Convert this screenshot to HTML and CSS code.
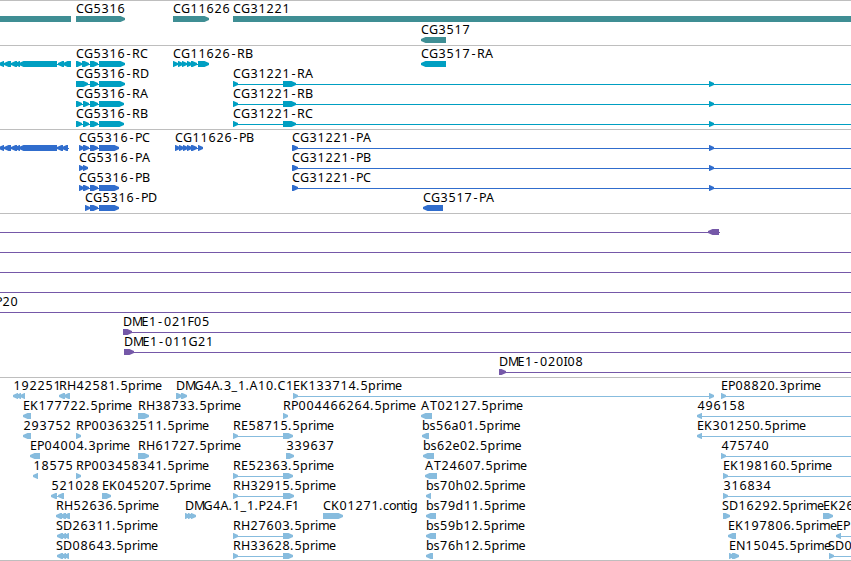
FILE: index.html
```html
<!DOCTYPE html>
<html lang="en">
<head>
    <meta charset="UTF-8">
    <meta name="viewport" content="width=device-width, initial-scale=1.0">
    <title>Genome Browser</title>
    <link rel="stylesheet" href="styles.css">
</head>
<body>
    <main class="browser">
        <section class="track genes" id="genes"></section>
        <section class="track transcripts" id="transcripts"></section>
        <section class="track proteins" id="proteins"></section>
        <section class="track clones" id="clones"></section>
        <section class="track ests" id="ests"></section>
    </main>
    <script src="script.js"></script>
</body>
</html>
```
FILE: styles.css
```css
* {
    margin: 0;
    padding: 0;
    box-sizing: border-box;
}
body {
    background-color: #fff;
    overflow: hidden;
}
.browser {
    display: flex;
    flex-direction: column;
    width: 851px;
    height: 561px;
    border-bottom: 1px solid #bebebe;
}
.track {
    border-top: 1px solid #bebebe;
    overflow: hidden;
}
.track svg {
    display: block;
    width: 100%;
    height: 100%;
}
.track text {
    font-family: "Noto Sans", sans-serif;
    font-size: 12.5px;
    fill: #000;
}
.genes {
    height: 45px;
    fill: #3f8e94;
}
.transcripts {
    height: 84px;
    fill: #009fc2;
}
.proteins {
    height: 84px;
    fill: #306dcd;
}
.clones {
    height: 164px;
    fill: #7558a8;
}
.ests {
    height: 183px;
    fill: #87bcde;
}
```
FILE: script.js
```js
const SVG = "http://www.w3.org/2000/svg";
const W = 851;

// one feature: [row, label, label x, direction, exons, line start, line end]
// direction: 1 = forward, -1 = reverse, 0 = no arrow head
const tracks = {
    genes: [
        [0, "", 0, 0, [[0, 71]]],
        [0, "CG5316", 76, 1, [[76, 125]]],
        [0, "CG11626", 173, 1, [[173, 209]]],
        [0, "CG31221", 233, 0, [[233, W]]],
        [1.05, "CG3517", 421, -1, [[421, 446]]]
    ],
    transcripts: [
        [0, "", 0, -1, [[-1, 4], [4, 11], [11, 17], [15, 20], [19, 57], [58, 64], [63, 71]]],
        [0, "CG5316-RC", 76, 1, [[76, 82], [82, 89], [90, 98], [99, 125]]],
        [0, "CG11626-RB", 173, 1, [[173, 178], [178, 183], [182, 187], [187, 192], [191, 197], [198, 209]]],
        [0, "CG3517-RA", 421, -1, [[421, 446]]],
        [1, "CG5316-RD", 76, 1, [[76, 88], [90, 98], [99, 125]]],
        [1, "CG31221-RA", 233, 1, [[233, 238], [283, 296], [709, 714]], 233, W],
        [2, "CG5316-RA", 76, 1, [[76, 82], [83, 89], [90, 98], [99, 124]]],
        [2, "CG31221-RB", 233, 1, [[233, 238], [283, 296], [709, 714]], 233, W],
        [3, "CG5316-RB", 76, 1, [[76, 82], [83, 89], [90, 98], [99, 124]]],
        [3, "CG31221-RC", 233, 1, [[233, 238], [283, 296], [709, 714]], 233, W]
    ],
    proteins: [
        [0, "", 0, -1, [[-1, 4], [4, 11], [11, 17], [15, 20], [19, 57], [57, 63], [62, 68]], 0, 69],
        [0, "CG5316-PC", 79, 1, [[79, 84], [83, 89], [90, 98], [99, 119]]],
        [0, "CG11626-PB", 175, 1, [[175, 180], [179, 184], [183, 188], [187, 192], [191, 197], [198, 203]]],
        [0, "CG31221-PA", 292, 1, [[292, 298], [709, 714]], 292, W],
        [1, "CG5316-PA", 79, 1, [[79, 84], [83, 88]]],
        [1, "CG31221-PB", 292, 1, [[292, 298], [709, 714]], 292, W],
        [2, "CG5316-PB", 79, 1, [[79, 84], [83, 89], [90, 98], [99, 119]]],
        [2, "CG31221-PC", 292, 1, [[292, 298], [709, 714]], 292, W],
        [3, "CG5316-PD", 85, 1, [[85, 90], [90, 98], [99, 119]]],
        [3, "CG3517-PA", 423, -1, [[423, 443]]]
    ],
    clones: [
        [0, "", 0, -1, [[708, 719]], 0, 720],
        [1, "", 0, 0, [], 0, W],
        [2, "", 0, 0, [], 0, W],
        [3, "", 0, 0, [], 0, W],
        [4, "P20", -5, 0, [], 0, W],
        [5, "DME1-021F05", 123, 1, [[123, 132]], 123, W],
        [6, "DME1-011G21", 124, 1, [[124, 134]], 124, W],
        [7, "DME1-020I08", 499, 1, [[499, 506]], 499, W]
    ],
    ests: [
        [0, "192251", 13, -1, [[13, 18], [16, 21], [20, 25]]],
        [0, "RH42581.5prime", 59, -1, [[59, 65], [64, 70]]],
        [0, "DMG4A.3_1.A10.C1", 176, 1, [[176, 182], [181, 187]]],
        [0, "EK133714.5prime", 293, 1, [[293, 298], [709, 714]]],
        [0, "EP08820.3prime", 721, 1, [[721, 726]], 721, W],
        [1, "EK177722.5prime", 23, -1, [[23, 31]]],
        [1, "RH38733.5prime", 138, 1, [[138, 149]]],
        [1, "RP004466264.5prime", 283, 1, [[283, 288]]],
        [1, "AT02127.5prime", 421, -1, [[421, 432]]],
        [1, "496158", 697, -1, [[697, 702]], 697, W],
        [2, "293752", 23, -1, [[23, 31]]],
        [2, "RP003632511.5prime", 76, 1, [[76, 81]]],
        [2, "RE58715.5prime", 233, 1, [[233, 238], [283, 293]]],
        [2, "bs56a01.5prime", 422, -1, [[422, 429]]],
        [2, "EK301250.5prime", 697, -1, [[697, 702]], 697, W],
        [3, "EP04004.3prime", 30, -1, [[30, 40]]],
        [3, "RH61727.5prime", 138, 1, [[138, 149]]],
        [3, "339637", 286, 1, [[286, 294]]],
        [3, "bs62e02.5prime", 423, -1, [[423, 434]]],
        [3, "475740", 721, 1, [[721, 726]], 721, W],
        [4, "18575", 33, -1, [[33, 38]]],
        [4, "RP003458341.5prime", 76, 1, [[76, 81]]],
        [4, "RE52363.5prime", 233, 1, [[233, 238], [283, 293]]],
        [4, "AT24607.5prime", 425, -1, [[425, 437]]],
        [4, "EK198160.5prime", 723, 1, [[723, 728]], 723, W],
        [5, "521028", 51, -1, [[51, 57], [58, 64]]],
        [5, "EK045207.5prime", 102, 1, [[102, 111]]],
        [5, "RH32915.5prime", 233, 1, [[233, 238], [283, 294]]],
        [5, "bs70h02.5prime", 426, -1, [[426, 431]]],
        [5, "316834", 723, 1, [[723, 728]], 723, W],
        [6, "RH52636.5prime", 56, -1, [[56, 62], [60, 66], [64, 70]]],
        [6, "DMG4A.1_1.P24.F1", 185, 1, [[185, 190], [188, 193], [191, 196]]],
        [6, "CK01271.contig", 323, 1, [[323, 343]]],
        [6, "bs79d11.5prime", 426, -1, [[426, 436]]],
        [6, "SD16292.5prime", 722, 1, [[723, 730]]],
        [6, "EK26", 823, 1, [[823, 833]]],
        [7, "SD26311.5prime", 56, -1, [[57, 63], [61, 66], [64, 69]]],
        [7, "RH27603.5prime", 233, 1, [[233, 238], [283, 293]]],
        [7, "bs59b12.5prime", 426, -1, [[426, 436]]],
        [7, "EK197806.5prime", 728, -1, [[728, 736]]],
        [7, "EP", 836, -1, [[836, 841]], 836, W],
        [8, "SD08643.5prime", 56, -1, [[57, 63], [61, 66], [64, 69]]],
        [8, "RH33628.5prime", 233, 1, [[233, 238], [283, 293]]],
        [8, "bs76h12.5prime", 426, -1, [[426, 433]]],
        [8, "EN15045.5prime", 729, 1, [[729, 734], [732, 739]]],
        [8, "SD0", 828, 1, [[829, 834]], 829, W]
    ]
};

// letter advances in pixels, 8 unless listed here
const advances = {
    "-": 7, ".": 4, "_": 6, A: 9, D: 9, E: 7, F: 6, G: 9, H: 9, I: 3.5, M: 9.5, N: 9, P: 7, S: 7, T: 7,
    a: 7, b: 7.5, c: 6, e: 7, i: 3, m: 11, n: 7, o: 7, r: 5, s: 6, t: 4
};

function letterPositions(label, x) {
    const list = [];
    for (const ch of label) {
        let shift = 0;
        if (/[0-9]/.test(ch)) {
            shift = 0.5;
        } else if (ch === "-") {
            shift = 1.5;
        }
        list.push(x + shift);
        x += advances[ch] || 8;
        if (ch === "A" && label.includes("4A.")) {
            x -= 1;
        }
    }
    return list.join(" ");
}

function add(parent, tag, attrs) {
    const el = document.createElementNS(SVG, tag);
    for (const key in attrs) {
        el.setAttribute(key, attrs[key]);
    }
    parent.appendChild(el);
    return el;
}

function exonPath(a, b, y, dir) {
    if (dir > 0) {
        return `M${a} ${y}H${b - 4.5}L${b} ${y + 2}V${y + 4}L${b - 4.5} ${y + 6}H${a}Z`;
    }
    if (dir < 0) {
        return `M${b} ${y}H${a + 4.5}L${a} ${y + 2}V${y + 4}L${a + 4.5} ${y + 6}H${b}Z`;
    }
    return `M${a} ${y}H${b}V${y + 6}H${a}Z`;
}

for (const id in tracks) {
    const svg = add(document.getElementById(id), "svg", {});
    for (const [row, label, x, dir, exons, start, end] of tracks[id]) {
        const y = 15 + row * 20;
        const from = start ?? exons[0][0];
        const to = end ?? exons[exons.length - 1][1];
        add(svg, "rect", { x: from, y: y + 3, width: to - from, height: 1 });
        for (const [a, b] of exons) {
            add(svg, "path", { d: exonPath(a, b, y, dir) });
        }
        if (label) {
            add(svg, "text", { x: letterPositions(label, x), y: y - 3 }).textContent = label;
        }
    }
}
```
